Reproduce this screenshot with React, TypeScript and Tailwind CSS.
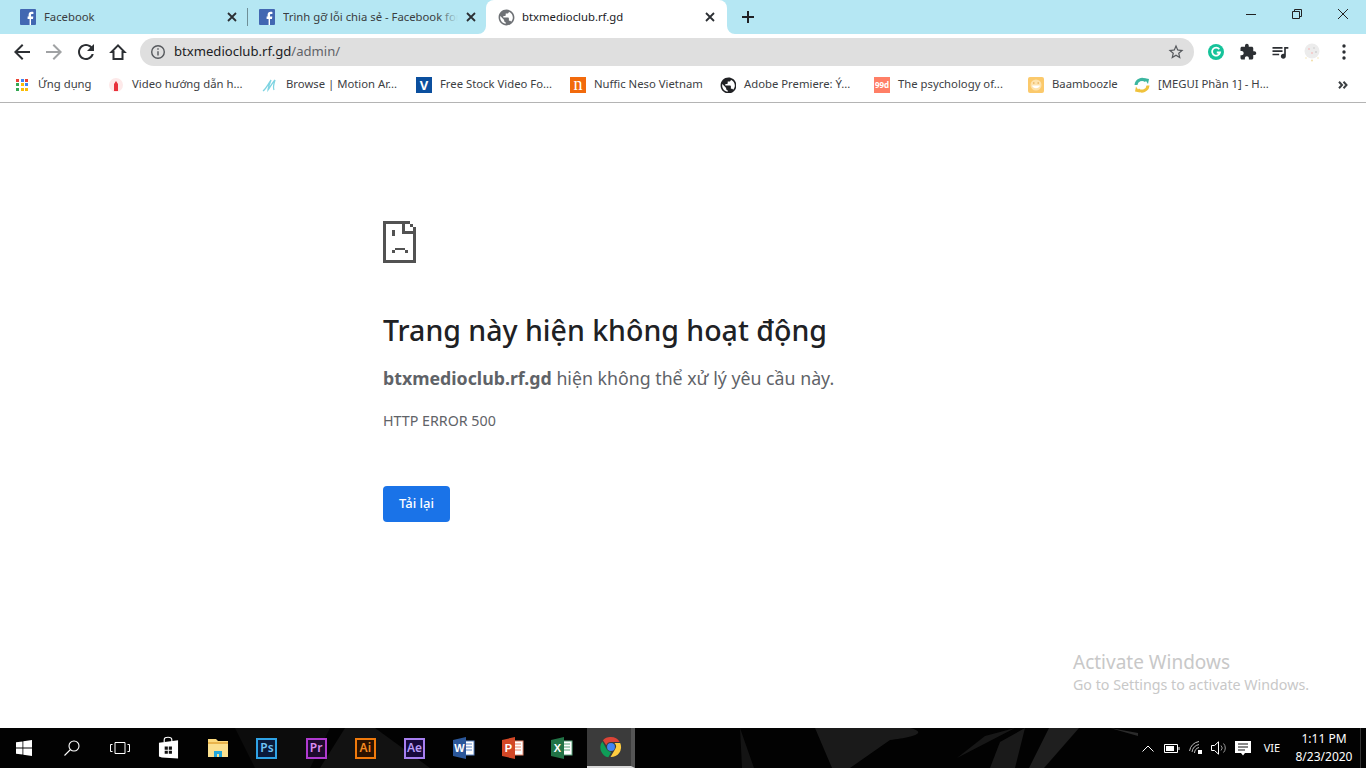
import type { ReactNode } from 'react';

const FONT = "font-['Noto_Sans','Open_Sans',sans-serif]";

function Glyph({ d, className }: { d: string; className?: string }) {
  return (
    <svg viewBox="0 0 24 24" className={className} fill="currentColor">
      <path d={d} />
    </svg>
  );
}

const PUBLIC_ICON =
  'M12 2C6.48 2 2 6.48 2 12s4.48 10 10 10 10-4.48 10-10S17.52 2 12 2zm-1 17.93c-3.95-.49-7-3.85-7-7.93 0-.62.08-1.21.21-1.79L9 15v1c0 1.1.9 2 2 2v1.93zm6.9-2.54c-.26-.81-1-1.39-1.9-1.39h-1v-3c0-.55-.45-1-1-1H8v-2h2c.55 0 1-.45 1-1V7h2c1.1 0 2-.9 2-2v-.41c2.93 1.19 5 4.06 5 7.41 0 2.08-.8 3.97-2.1 5.39z';

function FacebookIcon() {
  return (
    <svg viewBox="0 0 16 16" className="w-4 h-4 shrink-0">
      <rect width="16" height="16" rx="1" fill="#4267b2" />
      <path d="M11 16v-6h2l.3-2.4H11V6.2c0-.7.2-1.2 1.2-1.2h1.2V2.9c-.2 0-.9-.1-1.800-.1-1.800 0-3 1.100-3 3.100v1.700H7.600V10h2v6z" fill="#fff" />
    </svg>
  );
}

function CloseIcon() {
  return (
    <svg viewBox="0 0 10 10" className="w-[10px] h-[10px]" stroke="#2b2f33" strokeWidth="1.8">
      <path d="M1 1l8 8M9 1l-8 8" />
    </svg>
  );
}

function ToolBtn({ children }: { children: ReactNode }) {
  return <div className="w-8 h-8 shrink-0 flex items-center justify-center">{children}</div>;
}

function Toolbar() {
  return (
    <div className="h-[34px] bg-white flex items-center pt-[2px] pl-[6px] pr-[6px] text-[#2c2f33]">
      <ToolBtn><Glyph className="w-6 h-6" d="M20 11H7.830l5.590-5.590L12 4l-8 8 8 8 1.410-1.410L7.830 13H20v-2z" /></ToolBtn>
      <ToolBtn><Glyph className="w-6 h-6 text-[#a0a2a4]" d="M4 11h12.170l-5.590-5.590L12 4l8 8-8 8-1.410-1.410L16.170 13H4v-2z" /></ToolBtn>
      <ToolBtn><Glyph className="w-6 h-6" d="M17.650 6.350C16.200 4.900 14.210 4 12 4c-4.420 0-7.990 3.580-7.990 8s3.570 8 7.990 8c3.730 0 6.840-2.550 7.730-6h-2.080c-.82 2.330-3.040 4-5.650 4-3.310 0-6-2.690-6-6s2.690-6 6-6c1.660 0 3.140.69 4.220 1.780L13 11h7V4l-2.350 2.350z" /></ToolBtn>
      <ToolBtn>
        <svg viewBox="0 0 18 18" className="w-[18px] h-[18px]" fill="none" stroke="currentColor" strokeWidth="2">
          <path d="M9 2.400L2.500 9H4.500V16h9V9h2z" />
        </svg>
      </ToolBtn>
      <div className="ml-[6px] h-7 flex-1 rounded-full bg-[#dfdfdf] flex items-center pl-[10px] pr-[9px]">
        <svg viewBox="0 0 16 16" className="w-4 h-4 shrink-0 text-[#55585c]" fill="none" stroke="currentColor" strokeWidth="1.400">
          <circle cx="8" cy="8" r="6.300" />
          <path d="M8 7.200v4.300M8 4.300v1.500" />
        </svg>
        <span className="ml-2 text-[13.100px] leading-none whitespace-nowrap text-[#202124]">
          btxmedioclub.rf.gd<span className="text-[#5f6368]">/admin/</span>
        </span>
        <Glyph
          className="ml-auto w-[18px] h-[18px] text-[#55585c]"
          d="M22 9.240l-7.190-.62L12 2 9.190 8.630 2 9.240l5.460 4.730L5.820 21 12 17.270 18.180 21l-1.630-7.030L22 9.240zM12 15.400l-3.760 2.270 1-4.280-3.320-2.880 4.380-.38L12 6.100l1.710 4.040 4.380.38-3.320 2.880 1 4.280L12 15.400z"
        />
      </div>
      <div className="w-[6px]" />
      <ToolBtn>
        <svg viewBox="0 0 16 16" className="w-4 h-4">
          <circle cx="8" cy="8" r="8" fill="#15c39a" />
          <path d="M11.300 5.200A4 4 0 1 0 12 8.500H8.800" fill="none" stroke="#fff" strokeWidth="1.800" />
        </svg>
      </ToolBtn>
      <ToolBtn><Glyph className="w-[18px] h-[18px]" d="M20.500 11H19V7c0-1.100-.9-2-2-2h-4V3.500C13 2.120 11.880 1 10.500 1S8 2.120 8 3.500V5H4c-1.100 0-1.990.9-1.990 2v3.800H3.500c1.490 0 2.700 1.210 2.700 2.700s-1.210 2.700-2.700 2.700H2V20c0 1.100.9 2 2 2h3.800v-1.500c0-1.490 1.210-2.700 2.700-2.700 1.490 0 2.700 1.210 2.700 2.700V22H17c1.100 0 2-.9 2-2v-4h1.500c1.380 0 2.500-1.120 2.500-2.500S21.880 11 20.500 11z" /></ToolBtn>
      <ToolBtn><Glyph className="w-5 h-5" d="M15 6H3v2h12V6zm0 4H3v2h12v-2zM3 16h8v-2H3v2zM17 6v8.180c-.31-.11-.65-.18-1-.18-1.660 0-3 1.340-3 3s1.340 3 3 3 3-1.340 3-3V8h3V6h-5z" /></ToolBtn>
      <ToolBtn>
        <svg viewBox="0 0 18 20" className="w-[18px] h-5">
          <circle cx="9" cy="9" r="7.500" fill="#ececec" />
          <circle cx="6" cy="7" r="1" fill="#f3c6c6" />
          <circle cx="11" cy="6" r="1" fill="#d8d8d8" />
          <circle cx="9" cy="11" r="1" fill="#f3c6c6" />
          <circle cx="13" cy="10" r="1" fill="#d0d0d0" />
          <circle cx="9" cy="18.500" r="1" fill="#f2dfa8" />
          <circle cx="3" cy="16" r=".7" fill="#f2dfa8" />
          <circle cx="15" cy="16" r=".7" fill="#f2dfa8" />
        </svg>
      </ToolBtn>
      <ToolBtn>
        <svg viewBox="0 0 4 16" className="w-1 h-4" fill="#2c2f33">
          <circle cx="2" cy="2" r="1.700" />
          <circle cx="2" cy="8" r="1.700" />
          <circle cx="2" cy="14" r="1.700" />
        </svg>
      </ToolBtn>
    </div>
  );
}

function TabStrip() {
  return (
    <div className="h-[34px] bg-[#b5e7f3] flex shrink-0 text-[11.300px] text-[#3a3d40]">
      <div className="w-[8px]" />
      <div className="w-[239px] pl-3 pr-[10px] flex items-center">
        <FacebookIcon />
        <span className="ml-2 whitespace-nowrap">Facebook</span>
        <span className="ml-auto"><CloseIcon /></span>
      </div>
      <div className="w-px h-[18px] self-center bg-[#6f8f97]" />
      <div className="w-[238px] pl-[11px] pr-[10px] flex items-center">
        <FacebookIcon />
        <div className="relative ml-2 w-[175px] overflow-hidden whitespace-nowrap">
          Trình gỡ lỗi chia sẻ - Facebook for Developers
          <div className="absolute inset-y-0 right-0 w-5 bg-gradient-to-r from-transparent to-[#b5e7f3]" />
        </div>
        <span className="ml-auto"><CloseIcon /></span>
      </div>
      <div className="relative w-[241px] pl-[13px] pr-3 flex items-center bg-white rounded-t-lg text-[#202124]">
        <svg viewBox="0 0 8 8" className="absolute bottom-0 -left-2 w-2 h-2" fill="#fff"><path d="M8 0v8H0a8 8 0 0 0 8-8z" /></svg>
        <svg viewBox="0 0 8 8" className="absolute bottom-0 -right-2 w-2 h-2" fill="#fff"><path d="M0 0v8h8a8 8 0 0 1-8-8z" /></svg>
        <Glyph className="w-[19px] h-[19px] -ml-[2px] text-[#6e7175]" d={PUBLIC_ICON} />
        <span className="ml-[6px] whitespace-nowrap">btxmedioclub.rf.gd</span>
        <span className="ml-auto"><CloseIcon /></span>
      </div>
      <div className="w-[42px] flex items-center justify-center">
        <svg viewBox="0 0 12 12" className="w-3 h-3" stroke="#202124" strokeWidth="2"><path d="M6 0v12M0 6h12" /></svg>
      </div>
      <div className="ml-auto flex h-7 text-[#222]">
        <div className="w-[46px] flex items-center justify-center">
          <div className="w-[10px] h-px bg-[#222]" />
        </div>
        <div className="w-[46px] flex items-center justify-center">
          <svg viewBox="0 0 10 10" className="w-[10px] h-[10px]" fill="none" stroke="#222"><path d="M.5 2.500h7v7h-7zM2.500 2.500v-2h7v7h-2" /></svg>
        </div>
        <div className="w-[46px] flex items-center justify-center">
          <svg viewBox="0 0 10 10" className="w-[10px] h-[10px]" stroke="#222"><path d="M0 0l10 10M10 0L0 10" /></svg>
        </div>
      </div>
    </div>
  );
}

function AppsIcon() {
  const colors = ['#ea4335', '#4285f4', '#ea4335', '#34a853', '#fbbc05', '#4285f4', '#34a853', '#fbbc05', '#fbbc05'];
  return (
    <div className="w-[13px] h-[13px] grid grid-cols-3 gap-px ml-px shrink-0">
      {colors.map((c, i) => (
        <div key={i} className="w-[3px] h-[3px]" style={{ backgroundColor: c }} />
      ))}
    </div>
  );
}

function Bookmark({ icon, label, className }: { icon: ReactNode; label: string; className: string }) {
  return (
    <div className={`flex items-center shrink-0 ${className}`}>
      <div className="w-4 h-4 shrink-0 flex items-center justify-center overflow-hidden">{icon}</div>
      <span className="ml-2 mb-[2px] whitespace-nowrap">{label}</span>
    </div>
  );
}

function BookmarksBar() {
  return (
    <div className="h-[35px] shrink-0 bg-white border-b border-[#b4b4b4] flex items-center pl-[14px] text-[11.300px] text-[#3c4043]">
      <Bookmark className="w-[94px]" label="Ứng dụng" icon={<AppsIcon />} />
      <Bookmark
        className="w-[154px]"
        label="Video hướng dẫn h..."
        icon={
          <svg viewBox="0 0 16 16" className="w-4 h-4">
            <circle cx="8" cy="8" r="7" fill="#fde9e9" />
            <path d="M6 14V7l2-3 2 3v7z" fill="#e8303a" />
          </svg>
        }
      />
      <Bookmark
        className="w-[154px]"
        label="Browse | Motion Ar..."
        icon={
          <svg viewBox="0 0 16 16" className="w-4 h-4" fill="none" stroke="#7fd4e2" strokeWidth="1.300">
            <path d="M1 14c3-2 6-8 8-11-1 3-3 8-3 10 2-3 5-8 7-10-1 3-2 8-1 10" />
          </svg>
        }
      />
      <Bookmark
        className="w-[154px]"
        label="Free Stock Video Fo..."
        icon={<div className="w-4 h-4 bg-[#0b4f9e] text-white text-[13px] font-bold leading-4 text-center">V</div>}
      />
      <Bookmark
        className="w-[150px]"
        label="Nuffic Neso Vietnam"
        icon={<div className="w-4 h-4 bg-[#f26a0c] text-white text-[18px] leading-[14px] text-center font-['Liberation_Serif',serif]">n</div>}
      />
      <Bookmark className="w-[154px]" label="Adobe Premiere: Ý..." icon={<Glyph className="w-[19px] h-[19px] shrink-0 text-[#202124]" d={PUBLIC_ICON} />} />
      <Bookmark
        className="w-[154px]"
        label="The psychology of..."
        icon={<div className="w-4 h-4 bg-[#ff7f66] text-white text-[8px] font-bold leading-4 text-center">99d</div>}
      />
      <Bookmark
        className="w-[106px]"
        label="Baamboozle"
        icon={
          <svg viewBox="0 0 16 16" className="w-4 h-4">
            <rect width="16" height="16" rx="2" fill="#fbc96b" />
            <circle cx="8" cy="8" r="5.500" fill="#fde2ad" />
            <path d="M4 8.500c1 3.500 7 3.500 8 0z" fill="#fff" />
            <path d="M5 6h1.500M9.500 6H11" stroke="#e0a040" />
          </svg>
        }
      />
      <Bookmark
        className="w-[204px]"
        label="[MEGUI Phần 1] - H..."
        icon={
          <svg viewBox="0 0 16 16" className="w-4 h-4" fill="none" strokeWidth="3">
            <path d="M2 8a6 6 0 0 1 10-4" stroke="#3cb6a0" />
            <path d="M10 1l5 1-1 5z" fill="#3cb6a0" />
            <path d="M14 8.500a6 6 0 0 1-10 4" stroke="#f0c23c" />
            <path d="M6 15.500l-5-1 1-5z" fill="#f0c23c" />
          </svg>
        }
      />
      <svg viewBox="0 0 10 8" className="w-[10px] h-2" fill="none" stroke="#3c4043" strokeWidth="2">
        <path d="M1 .8L4 4 1 7.200M5.500 .8L8.500 4l-3 3.200" />
      </svg>
    </div>
  );
}

function ErrorIcon() {
  return (
    <svg viewBox="0 0 33 42" className="w-[33px] h-[42px]" fill="#525252" shapeRendering="crispEdges">
      <rect x="0" y="0" width="3" height="42" />
      <rect x="0" y="39" width="33" height="3" />
      <rect x="0" y="0" width="27" height="3" />
      <rect x="27" y="3" width="3" height="3" />
      <rect x="30" y="6" width="3" height="36" />
      <rect x="19" y="0" width="3" height="13" />
      <rect x="19" y="10" width="14" height="3" />
      <rect x="9" y="9" width="3" height="6" />
      <rect x="12" y="27" width="10" height="2" />
      <rect x="9" y="29" width="3" height="3" />
      <rect x="22" y="29" width="3" height="3" />
    </svg>
  );
}

function AdobeIcon({ label, className }: { label: string; className: string }) {
  return (
    <div className={`w-[21px] h-[21px] border-2 flex items-center justify-center text-[12px] font-semibold leading-none ${className}`}>
      {label}
    </div>
  );
}

function OfficeIcon({ letter, dark, light }: { letter: string; dark: string; light: string }) {
  return (
    <svg viewBox="0 0 22 22" className="w-[22px] h-[22px]">
      <rect x="9" y="4" width="12" height="14" fill="#fff" stroke={light} />
      <path d="M12 7h7M12 10h7M12 13h7" stroke={light} />
      <path d="M0 3l13-3v22L0 19z" fill={dark} />
      <text x="6.500" y="15" textAnchor="middle" fontSize="11" fontWeight="700" fill="#fff" fontFamily="Liberation Sans, sans-serif">{letter}</text>
    </svg>
  );
}

function Taskbar() {
  const slot = 'w-[49.2px] h-full flex items-center justify-center shrink-0';
  const firstSlot = 'w-12 h-full flex items-center justify-center shrink-0';
  return (
    <div className="relative h-10 shrink-0 bg-[#020202] overflow-hidden text-white">
      <svg viewBox="0 0 1366 40" className="absolute inset-0 w-full h-full" fill="#1a1a1a">
        <path d="M235 0h95l-20 40h-55z" fill="#0c0c0c" />
        <path d="M345 0h30l55 40h-110z" fill="#121212" />
        <path d="M815 0h95c20 5 0 10-20 12l-40 28h-18z" />
        <path d="M740 0l14 40h-12z" fill="#141414" />
        <path d="M985 8l30-8-58 30z" fill="#171717" />
        <path d="M1000 14l25-14-10 40h-25z" />
        <path d="M1049 0h30l-35 40h-15z" fill="#1f1f1f" />
        <path d="M1110 0l28 5v3z" fill="#2a2a2a" />
      </svg>
      <div className="relative h-full flex items-center">
        <div className={firstSlot}>
          <svg viewBox="0 0 16 16" className="w-4 h-4" fill="#fff">
            <path d="M0 2.300l6.500-.9v6.200H0zM7.300 1.300L16 0v7.600H7.300zM0 8.400h6.500v6.200L0 13.700zM7.300 8.400H16V16l-8.700-1.200z" />
          </svg>
        </div>
        <div className={firstSlot}>
          <svg viewBox="0 0 16 16" className="w-4 h-4" fill="none" stroke="#fff" strokeWidth="1.100">
            <circle cx="10" cy="6" r="5" />
            <path d="M6.500 9.500L.5 15.500" />
          </svg>
        </div>
        <div className={firstSlot}>
          <svg viewBox="0 0 20 14" className="w-5 h-[14px]" fill="none" stroke="#fff">
            <path d="M5 1.500h10v11H5zM2.500 3.500H.5v7h2M17.500 3.500h2v7h-2" />
          </svg>
        </div>
        <div className={slot}>
          <svg viewBox="0 0 22 24" className="w-[21px] h-6">
            <path d="M1 6.500L21 4v19l-17-1-3-1z" fill="#fff" />
            <path d="M6.500 6V3.500C6.500 1.500 8 .7 10.500.7s4 .8 4 2.800V6" fill="none" stroke="#fff" strokeWidth="1.200" />
            <path d="M7 10.500h3.300v3.300H7zM11.300 10.500h3.300v3.300h-3.300zM7 14.800h3.300v3.300H7zM11.300 14.800h3.300v3.300h-3.300z" fill="#111" />
          </svg>
        </div>
        <div className={slot}>
          <svg viewBox="0 0 22 20" className="w-[22px] h-5">
            <path d="M1 1h8l2 2h10v15H1z" fill="#fcd97c" />
            <path d="M1 4h20v2H1z" fill="#e9b44c" />
            <path d="M1 6h20v13H1z" fill="#fbe08f" />
            <path d="M7 19v-6h8v6h-3v-3h-2v3z" fill="#22a7dc" />
          </svg>
        </div>
        <div className={slot}><AdobeIcon label="Ps" className="border-[#2fa3e6] bg-[#0a1a3a] text-[#6fc3f5]" /></div>
        <div className={slot}><AdobeIcon label="Pr" className="border-[#b03ad0] bg-[#1e0a2e] text-[#dc8cf0]" /></div>
        <div className={slot}><AdobeIcon label="Ai" className="border-[#f07a0c] bg-[#2a1200] text-[#f58a20]" /></div>
        <div className={slot}><AdobeIcon label="Ae" className="border-[#a77ff0] bg-[#17093c] text-[#b79bf5]" /></div>
        <div className={slot}><OfficeIcon letter="W" dark="#2b579a" light="#5b84c4" /></div>
        <div className={slot}><OfficeIcon letter="P" dark="#d24726" light="#e8876c" /></div>
        <div className={slot}><OfficeIcon letter="X" dark="#217346" light="#5aa67c" /></div>
        <div className="w-12 h-full flex items-center justify-center shrink-0 bg-[#3b3b3b] border-b-2 border-[#d8d8d8] border-r-4 border-r-[#555]">
          <svg viewBox="0 0 24 24" className="w-[22px] h-[22px] ml-1">
            <path d="M12 1a11 11 0 0 1 9.500 5.500H12a5.500 5.500 0 0 0-5.200 3.700L3.200 4.500A11 11 0 0 1 12 1z" fill="#db4437" />
            <path d="M2.500 6L7.300 14.500a5.500 5.500 0 0 0 5 3l-3.200 5.800A11 11 0 0 1 2.500 6z" fill="#0f9d58" />
            <path d="M22 7.500a11 11 0 0 1-10.500 15.500l4.800-8.300a5.500 5.500 0 0 0-.5-7.200z" fill="#ffcd40" />
            <circle cx="12" cy="12" r="4.300" fill="#4285f4" />
          </svg>
        </div>
        <div className="ml-auto flex items-center h-full">
          <div className="w-6 flex justify-center">
            <svg viewBox="0 0 12 7" className="w-3 h-[7px]" fill="none" stroke="#fff"><path d="M.5 6.500L6 1l5.500 5.500" /></svg>
          </div>
          <div className="w-6 flex justify-center">
            <svg viewBox="0 0 16 9" className="w-4 h-[9px]" fill="none" stroke="#fff">
              <path d="M.5.500h13v8H.5z" />
              <path d="M2 2h8v5H2z" fill="#fff" stroke="none" />
              <path d="M15 3v3" />
            </svg>
          </div>
          <div className="w-6 flex justify-center">
            <svg viewBox="0 0 14 14" className="w-[14px] h-[14px]" fill="none" stroke="#bdbdbd">
              <path d="M.5 10A12 12 0 0 1 10 .5M3 11a9 9 0 0 1 7-7.500M5.500 12a6 6 0 0 1 4.500-5.500" />
              <rect x="9" y="9" width="4" height="4" fill="#fff" stroke="none" />
            </svg>
          </div>
          <div className="w-[22px] flex justify-center">
            <svg viewBox="0 0 16 14" className="w-4 h-[14px]" fill="none" stroke="#fff">
              <path d="M.5 4.500h3L7.500.8v12.400l-4-3.700h-3z" />
              <path d="M10 4.500a3.500 3.500 0 0 1 0 5M12.500 2.500a6.500 6.500 0 0 1 0 9" stroke="#9a9a9a" />
            </svg>
          </div>
          <div className="w-[26px] flex justify-center">
            <svg viewBox="0 0 16 16" className="w-4 h-4">
              <path d="M0 1h16v12h-6l-2 2.500L6 13H0z" fill="#fff" />
              <path d="M3 4h10M3 7h10M3 10h7" stroke="#111" />
            </svg>
          </div>
          <div className="w-[32px] text-center text-[11px]">VIE</div>
          <div className="w-[72px] text-center text-[12px] leading-[18px]">
            <div>1:11 PM</div>
            <div>8/23/2020</div>
          </div>
          <div className="w-px h-full bg-[#333]" />
          <div className="w-[5px]" />
        </div>
      </div>
    </div>
  );
}

export default function App() {
  return (
    <div className={`h-screen w-screen overflow-hidden flex flex-col bg-white ${FONT}`}>
      <TabStrip />
      <Toolbar />
      <BookmarksBar />
      <main className="relative flex-1 bg-white pl-[383px] pt-[118px]">
        <ErrorIcon />
        <h1 className="mt-[48px] text-[28.500px] leading-[38px] font-medium text-[#202124] whitespace-nowrap">Trang này hiện không hoạt động</h1>
        <p className="mt-[17px] text-[17.760px] leading-6 text-[#5f6368] whitespace-nowrap">
          <b className="font-bold">btxmedioclub.rf.gd</b> hiện không thể xử lý yêu cầu này.
        </p>
        <p className="mt-[21px] text-[14.250px] leading-5 text-[#5f6368] whitespace-nowrap">HTTP ERROR 500</p>
        <button className="mt-[55px] w-[67px] h-9 rounded bg-[#1a73e8] text-white text-[13px] font-medium">Tải lại</button>
        <div className="absolute left-[1073px] top-[545px] text-[#c8c8c8] whitespace-nowrap">
          <div className="text-[19px] leading-7">Activate Windows</div>
          <div className="text-[14.250px] leading-5 -mt-[1px]">Go to Settings to activate Windows.</div>
        </div>
      </main>
      <Taskbar />
    </div>
  );
}
